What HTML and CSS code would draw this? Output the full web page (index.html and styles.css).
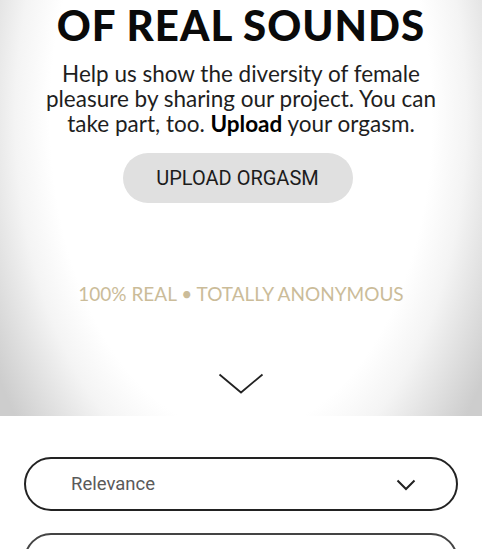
FILE: index.html
```html
<!DOCTYPE html>
<html lang="en">
<head>
<meta charset="utf-8">
<title>Real sounds</title>
<link rel="stylesheet" href="styles.css">
</head>
<body>
<section class="hero">
  <h1 class="hero-title">OF REAL SOUNDS</h1>
  <p class="hero-text">Help us show the diversity of female pleasure by sharing our project. You can take part, too. <strong>Upload</strong> your orgasm.</p>
  <button class="upload-btn" type="button">UPLOAD ORGASM</button>
  <p class="claim">100% REAL • TOTALLY ANONYMOUS</p>
  <svg class="scroll-down" width="46" height="22" viewBox="0 0 46 22" aria-hidden="true">
    <polyline points="1.5,1.5 23,19.5 44.5,1.5" fill="none" stroke="#222" stroke-width="1.8"/>
  </svg>
</section>
<section class="filters">
  <div class="select">
    <span class="select-label">Relevance</span>
    <svg class="select-caret" width="20" height="12" viewBox="0 0 20 12" aria-hidden="true">
      <polyline points="1.5,1.5 10,10 18.5,1.5" fill="none" stroke="#222" stroke-width="2"/>
    </svg>
  </div>
  <div class="select select-second">
    <span class="select-label">&nbsp;</span>
  </div>
</section>
</body>
</html>
```
FILE: styles.css
```css
html, body {
  margin: 0;
  padding: 0;
  background: #fff;
}
body {
  width: 482px;
  height: 549px;
  overflow: hidden;
}
.hero {
  height: 416px;
  display: flex;
  flex-direction: column;
  align-items: center;
  background: radial-gradient(ellipse 60% 115% at 50% 28%, #ffffff 66%, #f4f4f4 78%, #cdcdcd 100%);
}
.hero-title {
  margin: 0;
  font-family: Lato, sans-serif;
  font-weight: 900;
  font-size: 42px;
  line-height: 50px;
  color: #0a0a0a;
  letter-spacing: 1px;
}
.hero-text {
  margin: 11px 0 0;
  width: 400px;
  text-align: center;
  font-family: Lato, sans-serif;
  font-weight: 400;
  font-size: 22.5px;
  line-height: 25px;
  color: #1e1e1e;
}
.hero-text strong {
  font-weight: 700;
  color: #000;
}
.upload-btn {
  margin: 17px 7px 0 0;
  width: 230px;
  height: 50px;
  border: 0;
  border-radius: 25px;
  background: #e0e0e0;
  font-family: Roboto, sans-serif;
  font-size: 20px;
  line-height: 50px;
  color: #1c1c1c;
  padding: 0;
}
.claim {
  margin: 79px 0 0;
  font-family: Lato, sans-serif;
  font-weight: 400;
  font-size: 19px;
  line-height: 24px;
  color: #cbbc99;
}
.scroll-down {
  margin-top: 67px;
  display: block;
}
.filters {
  padding: 41px 24px 0 24px;
  display: flex;
  flex-direction: column;
  gap: 22px;
}
.select {
  height: 54px;
  box-sizing: border-box;
  border: 2px solid #222;
  border-radius: 27px;
  display: flex;
  align-items: center;
  justify-content: space-between;
  padding: 0 40px 0 45px;
}
.select-second {
  border-color: #444;
}
.select-label {
  font-family: Roboto, sans-serif;
  font-size: 18.5px;
  color: #5a5a5a;
}
.select-caret {
  display: block;
  margin-top: 2px;
}
```
